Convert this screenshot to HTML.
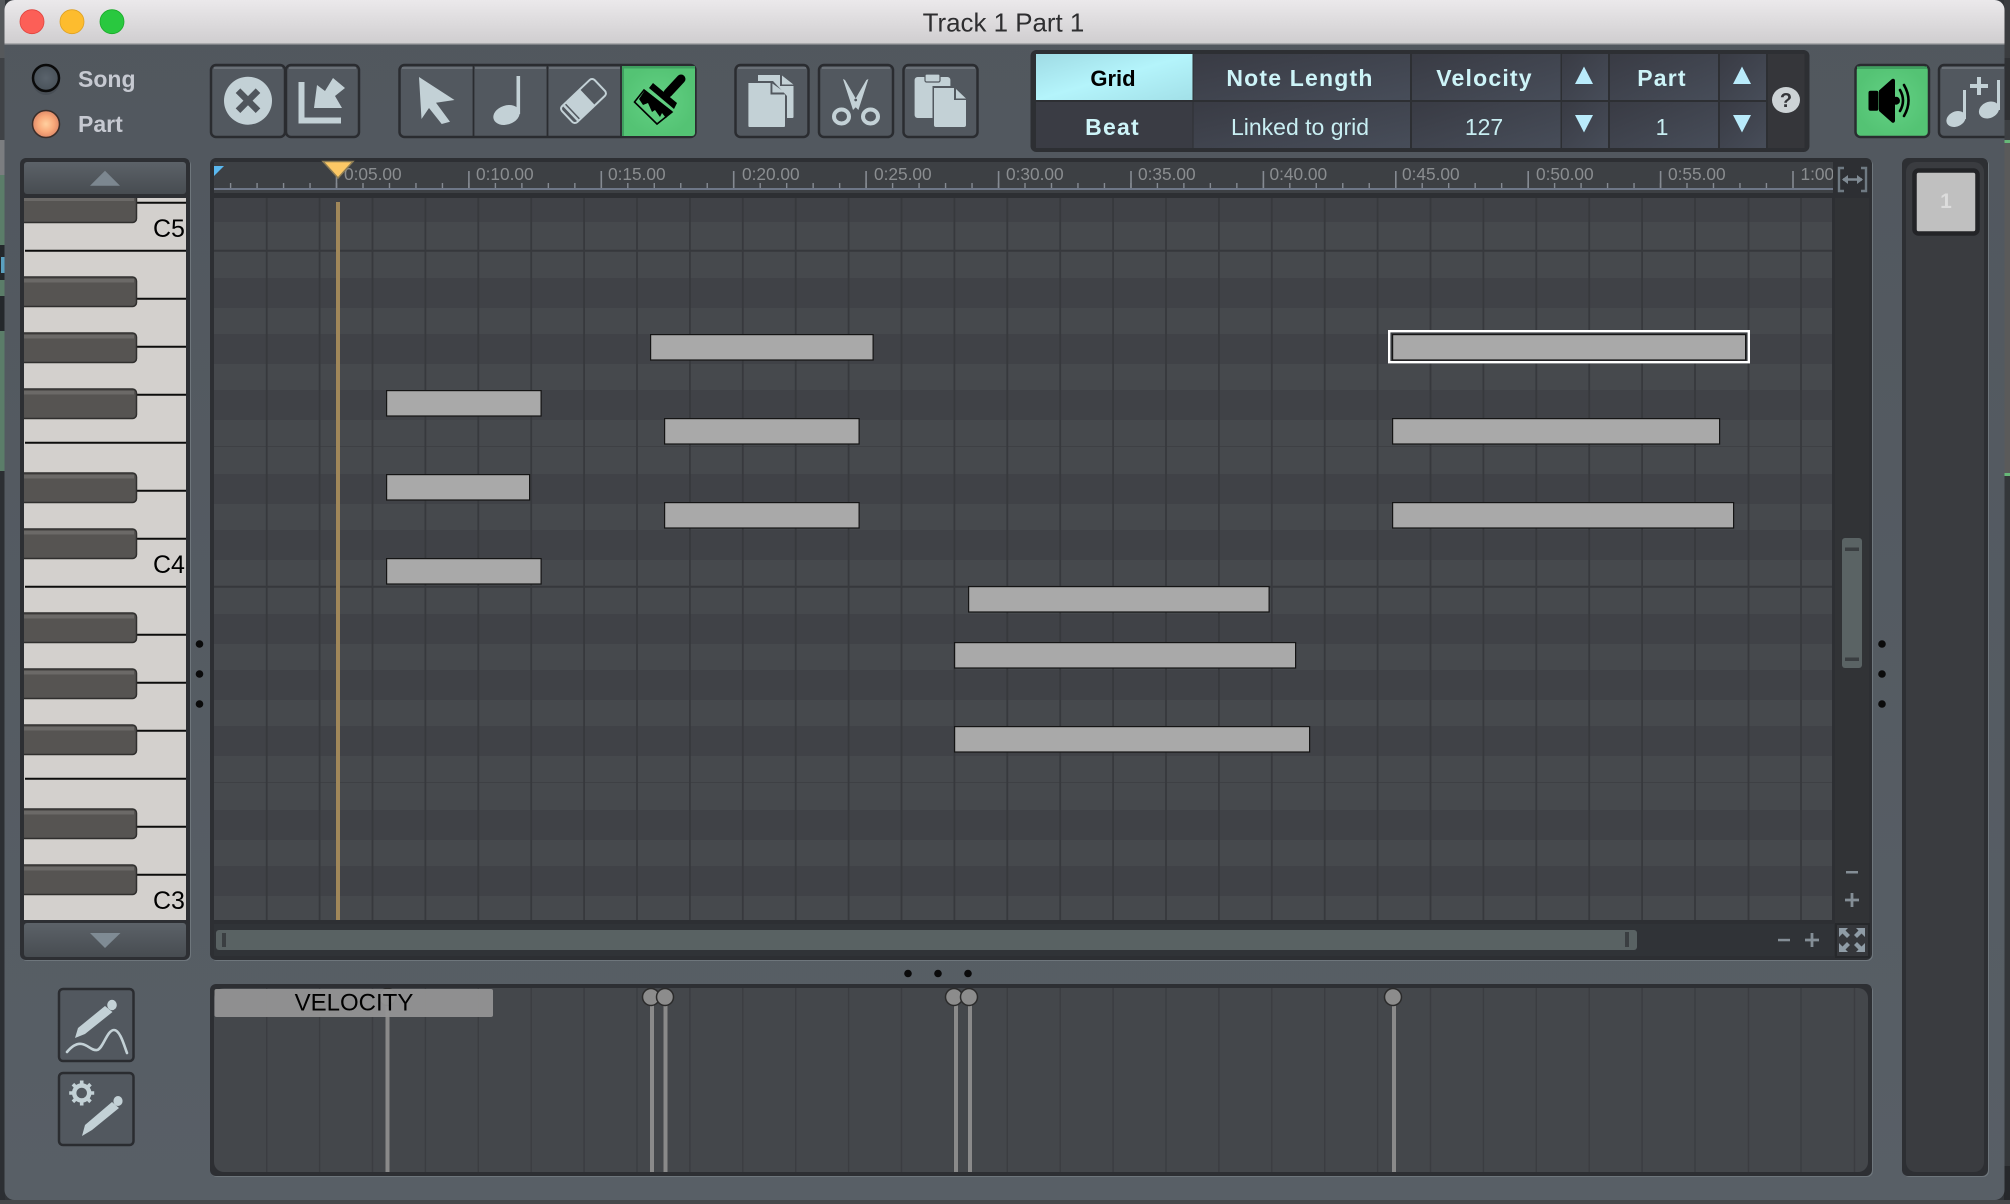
<!DOCTYPE html>
<html><head><meta charset="utf-8"><title>Track 1 Part 1</title>
<style>
html,body{margin:0;padding:0;background:#33363a;width:2010px;height:1204px;overflow:hidden}
svg{display:block}
text{font-family:"Liberation Sans",sans-serif}
.r{font-size:17.3px;fill:#8a8d90}
.h{font-size:23px;font-weight:bold;fill:#cdf4f8;text-anchor:middle;letter-spacing:1.2px}
.v{font-size:23px;fill:#c8eef2;text-anchor:middle}
.l{font-size:23px;font-weight:bold;fill:#c6c9d1}
.k{font-size:25px;fill:#000}
.btn{fill:#52585f;stroke:#2a2c30;stroke-width:2.5}
.hl{fill:#6a7077}
.ic{fill:#c3d1d6}
.cell{fill:url(#cell)}
.bk{fill:#565452;stroke:#302f2e;stroke-width:1.5}
.bh{fill:#6b6967}
.note{fill:#a9a9a9;stroke:#151515;stroke-width:1.2}
.dr{fill:#404247}
.dot{fill:#0b0b0b}
</style></head><body>
<svg width="2010" height="1204" viewBox="0 0 2010 1204" xmlns="http://www.w3.org/2000/svg">
<defs>
<linearGradient id="tb" x1="0" y1="0" x2="0" y2="1"><stop offset="0" stop-color="#ebe9eb"/><stop offset="1" stop-color="#d0ced0"/></linearGradient>
<linearGradient id="win" x1="0" y1="0" x2="0" y2="1"><stop offset="0" stop-color="#51575e"/><stop offset="1" stop-color="#585f66"/></linearGradient>
<linearGradient id="cell" x1="0" y1="0" x2="1" y2="1"><stop offset="0" stop-color="#393b44"/><stop offset="1" stop-color="#474d59"/></linearGradient>
<linearGradient id="grid" x1="0" y1="0" x2="1" y2="1"><stop offset="0" stop-color="#9fdbe4"/><stop offset=".5" stop-color="#b4f4fb"/><stop offset="1" stop-color="#a2e0e8"/></linearGradient>
<linearGradient id="ar" x1="0" y1="0" x2="0" y2="1"><stop offset="0" stop-color="#5c6268"/><stop offset="1" stop-color="#474c51"/></linearGradient>
<radialGradient id="gr"><stop offset="0" stop-color="#63d184"/><stop offset="1" stop-color="#54c374"/></radialGradient>
<radialGradient id="led1"><stop offset="0" stop-color="#5a636c"/><stop offset="1" stop-color="#49525a"/></radialGradient>
<radialGradient id="led2"><stop offset="0" stop-color="#ffd0a0"/><stop offset=".6" stop-color="#f9a97a"/><stop offset="1" stop-color="#e08a68"/></radialGradient>
<clipPath id="kb"><rect x="24" y="198" width="162" height="722"/></clipPath>
<clipPath id="rl"><rect x="214" y="162" width="1619" height="32"/></clipPath>
<clipPath id="wn"><rect x="4.5" y="0" width="2000" height="1200" rx="10"/></clipPath>
</defs>

<!-- outside the window -->
<rect width="2010" height="1204" fill="#313438"/>
<rect x="0" y="0" width="5" height="58" fill="#55585b"/>
<rect x="0" y="58" width="5" height="82" fill="#3f4246"/>
<rect x="0" y="140" width="5" height="35" fill="#7b7d80"/>
<rect x="0" y="175" width="5" height="70" fill="#5b7d69"/>
<rect x="0" y="245" width="5" height="35" fill="#24282c"/>
<rect x="1" y="257" width="4" height="16" fill="#5aa0c0"/>
<rect x="0" y="280" width="5" height="16" fill="#5b7d69"/>
<rect x="0" y="296" width="5" height="35" fill="#24282c"/>
<rect x="0" y="331" width="5" height="140" fill="#5b7d69"/>
<rect x="0" y="471" width="5" height="733" fill="#2c2f33"/>
<rect x="2004" y="0" width="6" height="58" fill="#3a3c3f"/>
<rect x="2004" y="58" width="6" height="62" fill="#2f3134"/>
<rect x="2004" y="120" width="6" height="20" fill="#3c3f42"/>
<rect x="2004" y="140" width="6" height="3" fill="#66b878"/>
<rect x="2004" y="143" width="6" height="330" fill="#5a5a5a"/>
<rect x="2004" y="473" width="6" height="3" fill="#66b878"/>
<rect x="2004" y="476" width="6" height="690" fill="#34373a"/>
<rect x="2004" y="1166" width="6" height="38" fill="#26282b"/>
<rect x="0" y="1200" width="2010" height="4" fill="#45474a"/>

<!-- window -->
<rect x="4.5" y="0" width="2000" height="1200" rx="10" fill="url(#win)"/>
<g clip-path="url(#wn)">
<rect x="4.5" y="0" width="2000" height="43" fill="url(#tb)"/>
<rect x="4.5" y="43" width="2000" height="1.5" fill="#a9aaac"/>
</g>
<circle cx="32" cy="21.7" r="12" fill="#fc5f57" stroke="#e0443e" stroke-width=".8"/>
<circle cx="72" cy="21.7" r="12" fill="#fdbc2e" stroke="#dea123" stroke-width=".8"/>
<circle cx="112" cy="21.7" r="12" fill="#29c83f" stroke="#1aab29" stroke-width=".8"/>
<text x="1003.5" y="31.6" text-anchor="middle" font-size="25.9" fill="#2e2e30">Track 1 Part 1</text>

<!-- LEDs -->
<ellipse cx="46" cy="80" rx="14" ry="15" fill="#484e55"/>
<circle cx="46" cy="78" r="13" fill="url(#led1)" stroke="#0a0a0a" stroke-width="2.5"/>
<circle cx="46" cy="124" r="13.5" fill="url(#led2)" stroke="#3a2e2a" stroke-width="1.5"/>
<text class="l" x="78" y="87">Song</text>
<text class="l" x="78" y="132">Part</text>

<!-- Toolbar buttons -->
<g>
<rect class="btn" x="211" y="65" width="74" height="72" rx="5"/><rect class="hl" x="214" y="67" width="68" height="2"/>
<rect class="btn" x="286" y="65" width="73" height="72" rx="5"/><rect class="hl" x="289" y="67" width="67" height="2"/>
<rect class="btn" x="399.5" y="65" width="296" height="72" rx="5"/>
<rect class="hl" x="402" y="67" width="71" height="2"/><rect class="hl" x="475" y="67" width="71" height="2"/><rect class="hl" x="549" y="67" width="71" height="2"/>
<path d="M473.5 65V137M547.5 65V137M621 65V137" stroke="#2a2c30" stroke-width="1.8"/>
<path d="M622 66H692a3 3 0 0 1 3 3V133a3 3 0 0 1-3 3H622Z" fill="url(#gr)"/>
<rect x="622" y="66" width="73" height="2.5" fill="#3f9f5f"/><rect x="622" y="66" width="2" height="70" fill="#3f9f5f"/>
<rect class="btn" x="735.5" y="65" width="73" height="72" rx="5"/><rect class="hl" x="738" y="67" width="68" height="2"/>
<rect class="btn" x="819" y="65" width="74" height="72" rx="5"/><rect class="hl" x="822" y="67" width="68" height="2"/>
<rect class="btn" x="903.5" y="65" width="74" height="72" rx="5"/><rect class="hl" x="906" y="67" width="69" height="2"/>
<rect x="1855.5" y="65" width="73.5" height="72" rx="5" fill="url(#gr)" stroke="#2a2c30" stroke-width="2.5"/><rect x="1857" y="66.5" width="70" height="2.5" fill="#3f9f5f"/>
<rect class="btn" x="1939" y="65" width="85" height="72" rx="5" clip-path="url(#wn)"/><rect class="hl" x="1942" y="67" width="62" height="2"/>
</g>

<!-- X -->
<circle cx="248" cy="100.7" r="24" class="ic"/>
<path d="M238 90.7L258 110.7M258 90.7L238 110.7" stroke="#4f555c" stroke-width="6.5"/>
<!-- import -->
<path d="M301.5 82V120.5H341" fill="none" stroke="#c3d1d6" stroke-width="6"/>
<polygon class="ic" points="333,78 345,88 335,96 342,108 314,108 317,85 325,91"/>
<!-- pointer -->
<polygon class="ic" points="419,77 454.5,100 436,102.7 450,121.7 441.7,124 429,108 421.5,119"/>
<!-- note -->
<rect class="ic" x="516.5" y="76" width="3.6" height="38"/>
<ellipse class="ic" cx="506.5" cy="115" rx="13.5" ry="9.5" transform="rotate(-18 506.5 115)"/>
<!-- eraser -->
<g transform="rotate(-43.5 583.5 101)">
<rect x="561" y="90" width="45" height="22" rx="3.5" fill="#52585f" stroke="#c3d1d6" stroke-width="2"/>
<rect x="569" y="90" width="20" height="22" class="ic"/>
<rect x="565" y="90" width="2.5" height="22" class="ic"/>
</g>
<!-- brush -->
<path d="M681 79L668 93" stroke="#000" stroke-width="9" stroke-linecap="round"/>
<polygon points="653,83 677,103 674,109 649,88" fill="#000"/>
<polygon points="645,90 672,111 666,118 662,113 660,117 655,110 652,112 648,103 643,105 639,99" fill="#000"/>
<polygon points="634.5,102 644,90 672,112 657,124" fill="none" stroke="#000" stroke-width="1.6"/>
<!-- copy -->
<path class="ic" d="M758 75H780V86H793.5V117a1 1 0 0 1-1 1H758Z"/>
<path class="ic" d="M782 75.5L793.4 84.5H782Z"/>
<path d="M746.5 81H773L787 96V129H746.5Z" fill="#52585f"/>
<path class="ic" d="M748.4 83H770.5V94.5H785V126a1 1 0 0 1-1 1H749.4a1 1 0 0 1-1-1Z"/>
<path class="ic" d="M772.4 83.5L785 92.5H772.4Z"/>
<!-- scissors -->
<polygon class="ic" points="843,79 845,80 859,104 853,110"/>
<polygon class="ic" points="868.4,79 866.4,80 852.4,104 858.4,110"/>
<circle cx="855.7" cy="100" r="1.4" fill="#52585f"/>
<ellipse cx="841.5" cy="116.5" rx="7.5" ry="7" fill="#52585f" stroke="#c3d1d6" stroke-width="4"/>
<ellipse cx="870.5" cy="116.5" rx="7.5" ry="7" fill="#52585f" stroke="#c3d1d6" stroke-width="4"/>
<!-- paste -->
<rect class="ic" x="914.6" y="77" width="35.8" height="41" rx="3"/>
<rect class="ic" x="925" y="74" width="15" height="8" rx="1.5" stroke="#52585f" stroke-width="1.2"/>
<path d="M932.5 86H955L967.5 99V127a3 3 0 0 1-3 3H935.5a3 3 0 0 1-3-3Z" fill="#52585f"/>
<path class="ic" d="M934 88H954V100H966V125a2 2 0 0 1-2 2H936a2 2 0 0 1-2-2Z"/>
<path class="ic" d="M956 89L966 98.5H956Z"/>
<!-- speaker -->
<rect x="1868.5" y="90.7" width="10" height="20" rx="2" fill="#000"/>
<path d="M1879 90.5L1892 79a2 2 0 0 1 3 1.5V121a2 2 0 0 1-3 1.5L1879 111Z" fill="#000"/>
<circle cx="1896" cy="100.7" r="4" fill="#000"/>
<path d="M1900 90Q1906 100.5 1900 111M1904 85Q1913 100.5 1904 116" fill="none" stroke="#000" stroke-width="2.6" stroke-linecap="round"/>
<!-- add notes -->
<g clip-path="url(#wn)">
<rect class="ic" x="1963" y="90" width="3" height="29"/>
<ellipse class="ic" cx="1956" cy="119" rx="10" ry="7.5" transform="rotate(-25 1956 119)"/>
<rect class="ic" x="1997" y="80" width="3" height="30"/>
<ellipse class="ic" cx="1989" cy="110" rx="10.5" ry="8" transform="rotate(-25 1989 110)"/>
<path d="M1979 77V95M1970 86H1988" stroke="#c3d1d6" stroke-width="4"/>
</g>

<!-- Grid panel -->
<rect x="1030.5" y="50" width="779" height="102" rx="6" fill="#2d2f33"/>
<rect x="1036" y="54" width="156.5" height="46" fill="url(#grid)"/>
<rect x="1193.5" y="54" width="216.5" height="46" class="cell"/>
<rect x="1412" y="54" width="148.5" height="46" class="cell"/>
<rect x="1562" y="54" width="46" height="46" class="cell"/>
<rect x="1610" y="54" width="108" height="46" class="cell"/>
<rect x="1720" y="54" width="46" height="46" class="cell"/>
<rect x="1036" y="102" width="156.5" height="46" fill="#3a3c44"/>
<rect x="1193.5" y="102" width="216.5" height="46" class="cell"/>
<rect x="1412" y="102" width="148.5" height="46" class="cell"/>
<rect x="1562" y="102" width="46" height="46" class="cell"/>
<rect x="1610" y="102" width="108" height="46" class="cell"/>
<rect x="1720" y="102" width="46" height="46" class="cell"/>
<rect x="1768" y="54" width="36.5" height="94" fill="#35363a"/>
<text x="1113" y="86" text-anchor="middle" font-size="22" font-weight="bold" fill="#000">Grid</text>
<text class="h" x="1300" y="86">Note Length</text>
<text class="h" x="1484.5" y="86">Velocity</text>
<text class="h" x="1662" y="86">Part</text>
<text class="h" x="1112.5" y="135">Beat</text>
<text class="v" x="1300" y="135">Linked to grid</text>
<text class="v" x="1484" y="135">127</text>
<text class="v" x="1662" y="135">1</text>
<polygon points="1584,66.5 1593,84 1575,84" fill="#b9ebfb"/>
<polygon points="1742,66.5 1751,84 1733,84" fill="#b9ebfb"/>
<polygon points="1584,132.5 1593,115 1575,115" fill="#b9ebfb"/>
<polygon points="1742,132.5 1751,115 1733,115" fill="#b9ebfb"/>
<ellipse cx="1786" cy="100" rx="14" ry="13" fill="#cdd3d6"/>
<text x="1786" y="107" text-anchor="middle" font-size="20" font-weight="bold" fill="#35363a">?</text>

<!-- Piano panel -->
<rect x="21" y="159" width="170" height="802" rx="6" fill="#6e767c"/>
<rect x="20" y="158" width="170" height="802" rx="6" fill="#2d2f33"/>
<rect x="24" y="162" width="162" height="32" rx="3" fill="url(#ar)"/>
<polygon points="105,170.7 120,185.7 90,185.7" fill="#7c8790"/>
<rect x="24" y="198" width="162" height="722" fill="#d3d0cd"/>
<g clip-path="url(#kb)">
<path d="M137 202.7H186M25 250.7H186M137 298.7H186M137 346.7H186M137 394.7H186M25 442.7H186M137 490.7H186M137 538.7H186M25 586.7H186M137 634.7H186M137 682.7H186M137 730.7H186M25 778.7H186M137 826.7H186M137 874.7H186" stroke="#0c0c0c" stroke-width="2"/>
<rect class="bk" x="10" y="193" width="126.5" height="29.5" rx="4"/><rect class="bh" x="24" y="198" width="110" height="3"/>
<rect class="bk" x="10" y="277" width="126.5" height="29.5" rx="4"/><rect class="bh" x="24" y="279" width="110" height="3.5"/>
<rect class="bk" x="10" y="333" width="126.5" height="29.5" rx="4"/><rect class="bh" x="24" y="335" width="110" height="3.5"/>
<rect class="bk" x="10" y="389" width="126.5" height="29.5" rx="4"/><rect class="bh" x="24" y="391" width="110" height="3.5"/>
<rect class="bk" x="10" y="473" width="126.5" height="29.5" rx="4"/><rect class="bh" x="24" y="475" width="110" height="3.5"/>
<rect class="bk" x="10" y="529" width="126.5" height="29.5" rx="4"/><rect class="bh" x="24" y="531" width="110" height="3.5"/>
<rect class="bk" x="10" y="613" width="126.5" height="29.5" rx="4"/><rect class="bh" x="24" y="615" width="110" height="3.5"/>
<rect class="bk" x="10" y="669" width="126.5" height="29.5" rx="4"/><rect class="bh" x="24" y="671" width="110" height="3.5"/>
<rect class="bk" x="10" y="725" width="126.5" height="29.5" rx="4"/><rect class="bh" x="24" y="727" width="110" height="3.5"/>
<rect class="bk" x="10" y="809" width="126.5" height="29.5" rx="4"/><rect class="bh" x="24" y="811" width="110" height="3.5"/>
<rect class="bk" x="10" y="865" width="126.5" height="29.5" rx="4"/><rect class="bh" x="24" y="867" width="110" height="3.5"/>
</g>
<text class="k" x="153" y="237">C5</text>
<text class="k" x="153" y="573">C4</text>
<text class="k" x="153" y="909">C3</text>
<rect x="24" y="923" width="162" height="34" rx="3" fill="url(#ar)"/>
<polygon points="105,948 120.5,933 90,933" fill="#7f8b94"/>

<!-- Main panel -->
<rect x="211" y="159" width="1662" height="802" rx="6" fill="#6e767c"/>
<rect x="210" y="158" width="1662" height="802" rx="6" fill="#2d2f33"/>
<!-- ruler -->
<rect x="214" y="162" width="1619" height="31" fill="#3d4044"/>
<rect x="214" y="188" width="1619" height="2" fill="#6e7788"/>
<g clip-path="url(#rl)">
<path stroke="#858a92" stroke-width="1.4" fill="none" d="M230.6 183v5m26.48-5v5m26.48-5v5m26.48-5v5m26.48-5v5m26.48-5v5m26.48-5v5m26.48-5v5m26.48-5v5m26.48-5v5m26.48-5v5m26.48-5v5m26.48-5v5m26.48-5v5m26.48-5v5m26.48-5v5m26.48-5v5m26.48-5v5m26.48-5v5m26.48-5v5m26.48-5v5m26.48-5v5m26.48-5v5m26.48-5v5m26.48-5v5m26.48-5v5m26.48-5v5m26.48-5v5m26.48-5v5m26.48-5v5m26.48-5v5m26.48-5v5m26.48-5v5m26.48-5v5m26.48-5v5m26.48-5v5m26.48-5v5m26.48-5v5m26.48-5v5m26.48-5v5m26.48-5v5m26.48-5v5m26.48-5v5m26.48-5v5m26.48-5v5m26.48-5v5m26.48-5v5m26.48-5v5m26.48-5v5m26.48-5v5m26.48-5v5m26.48-5v5m26.48-5v5m26.48-5v5m26.48-5v5m26.48-5v5m26.48-5v5m26.48-5v5m26.48-5v5"/>
<path stroke="#858a92" stroke-width="1.6" fill="none" d="M336.5 171V188M468.9 171V188M601.3 171V188M733.7 171V188M866.1 171V188M998.6 171V188M1131 171V188M1263.4 171V188M1395.8 171V188M1528.2 171V188M1660.6 171V188M1793 171V188"/>
<text class="r" x="344" y="180">0:05.00</text>
<text class="r" x="476" y="180">0:10.00</text>
<text class="r" x="608" y="180">0:15.00</text>
<text class="r" x="742" y="180">0:20.00</text>
<text class="r" x="874" y="180">0:25.00</text>
<text class="r" x="1006" y="180">0:30.00</text>
<text class="r" x="1138" y="180">0:35.00</text>
<text class="r" x="1269.5" y="180">0:40.00</text>
<text class="r" x="1402" y="180">0:45.00</text>
<text class="r" x="1536" y="180">0:50.00</text>
<text class="r" x="1668" y="180">0:55.00</text>
<text class="r" x="1800.5" y="180">1:00.00</text>
</g>
<polygon points="214,166 224,166 214,176" fill="#5ab8f0"/>
<polygon points="323,161.5 353,161.5 338,178" fill="#fcc865" stroke="#8d7d55" stroke-width="1.5"/>
<path d="M1844 168H1839V191H1844M1861 168H1866V191H1861" fill="none" stroke="#6f7a83" stroke-width="2.4"/>
<path d="M1843 179.5H1862" stroke="#7f8a93" stroke-width="2.4"/>
<polygon points="1842,179.5 1848,175 1848,184" fill="#7f8a93"/>
<polygon points="1863,179.5 1857,175 1857,184" fill="#7f8a93"/>

<!-- note grid -->
<rect x="214" y="198" width="1618" height="722" fill="#46494d"/>
<rect class="dr" x="214" y="198" width="1618" height="24"/>
<rect class="dr" x="214" y="278" width="1618" height="30"/>
<rect class="dr" x="214" y="334" width="1618" height="30"/>
<rect class="dr" x="214" y="390" width="1618" height="30"/>
<rect class="dr" x="214" y="474" width="1618" height="30"/>
<rect class="dr" x="214" y="530" width="1618" height="30"/>
<rect class="dr" x="214" y="614" width="1618" height="30"/>
<rect class="dr" x="214" y="670" width="1618" height="30"/>
<rect class="dr" x="214" y="726" width="1618" height="30"/>
<rect class="dr" x="214" y="810" width="1618" height="30"/>
<rect class="dr" x="214" y="866" width="1618" height="30"/>
<path d="M214 250.7H1832M214 586.7H1832" stroke="#36383c" stroke-width="2"/>
<path d="M214 446.5H1832M214 782.5H1832" stroke="#3e4044" stroke-width="1"/>
<path stroke="#37393d" stroke-width="1.8" fill="none" d="M266.7 198V920M319.6 198V920M372.5 198V920M425.4 198V920M478.3 198V920M531.2 198V920M584.1 198V920M637 198V920M689.9 198V920M742.8 198V920M795.7 198V920M848.6 198V920M901.5 198V920M954.4 198V920M1007.3 198V920M1060.2 198V920M1113.1 198V920M1166 198V920M1218.9 198V920M1271.8 198V920M1324.7 198V920M1377.6 198V920M1430.5 198V920M1483.4 198V920M1536.3 198V920M1589.2 198V920M1642.1 198V920M1695 198V920M1748.5 198V920M1801 198V920"/>
<rect x="336" y="202" width="4" height="718" fill="#a0875a"/>
<!-- notes -->
<rect class="note" x="386.6" y="390.6" width="154.5" height="25.4"/>
<rect class="note" x="386.6" y="474.6" width="143" height="25.4"/>
<rect class="note" x="386.6" y="558.6" width="154.5" height="25.4"/>
<rect class="note" x="650.6" y="334.6" width="222.5" height="25.4"/>
<rect class="note" x="664.6" y="418.6" width="194.5" height="25.4"/>
<rect class="note" x="664.6" y="502.6" width="194.5" height="25.4"/>
<rect class="note" x="968.6" y="586.6" width="300.5" height="25.4"/>
<rect class="note" x="954.6" y="642.6" width="341" height="25.4"/>
<rect class="note" x="954.6" y="726.6" width="355" height="25.4"/>
<rect x="1389.2" y="331.2" width="359.6" height="31" fill="#3a3c40" stroke="#fff" stroke-width="2.4"/>
<rect class="note" x="1392.6" y="334.6" width="353" height="25.4"/>
<rect class="note" x="1392.6" y="418.6" width="327" height="25.4"/>
<rect class="note" x="1392.6" y="502.6" width="341" height="25.4"/>

<!-- scrollbars -->
<rect x="1835" y="198" width="34" height="725" fill="#313336"/>
<rect x="1842" y="538" width="20" height="130" rx="3" fill="#5a6364"/>
<rect x="1845" y="547.5" width="14" height="3.5" fill="#3a3e41"/>
<rect x="1845" y="657.5" width="14" height="3.5" fill="#3a3e41"/>
<rect x="1846" y="871" width="12" height="2.5" fill="#848e96"/>
<path d="M1845 900H1859M1852 893V907" stroke="#848e96" stroke-width="2.8"/>
<rect x="214" y="924" width="1620" height="32" fill="#303337"/>
<rect x="216" y="930" width="1421" height="20" rx="3" fill="#596263"/>
<rect x="222" y="933" width="4" height="14" fill="#3a3e41"/>
<rect x="1625" y="932" width="4" height="15" fill="#3a3e41"/>
<rect x="1778" y="938.8" width="12" height="2.5" fill="#848e96"/>
<path d="M1805 940H1819M1812 933V947" stroke="#848e96" stroke-width="2.8"/>
<rect x="1835" y="923" width="35" height="35" fill="#26282b"/>
<rect x="1837" y="925" width="31" height="31" fill="#35373b"/>
<g fill="#8f9ca6">
<polygon points="1839,928 1848,928 1845.5,930.5 1850,935 1847,938 1842.5,933.5 1839,937"/>
<polygon points="1865,928 1856,928 1858.5,930.5 1854,935 1857,938 1861.5,933.5 1865,937"/>
<polygon points="1839,952 1848,952 1845.5,949.5 1850,945 1847,942 1842.5,946.5 1839,943"/>
<polygon points="1865,952 1856,952 1858.5,949.5 1854,945 1857,942 1861.5,946.5 1865,943"/>
</g>

<!-- handle dots -->
<circle class="dot" cx="199.5" cy="644" r="3.8"/><circle class="dot" cx="199.5" cy="674" r="3.8"/><circle class="dot" cx="199.5" cy="704" r="3.8"/>
<circle class="dot" cx="1882" cy="644" r="3.8"/><circle class="dot" cx="1882" cy="674" r="3.8"/><circle class="dot" cx="1882" cy="704" r="3.8"/>
<circle class="dot" cx="908" cy="973.5" r="3.8"/><circle class="dot" cx="938" cy="973.5" r="3.8"/><circle class="dot" cx="968" cy="973.5" r="3.8"/>

<!-- Right panel -->
<rect x="1903" y="159" width="86" height="1018" rx="6" fill="#6e767c"/>
<rect x="1902" y="158" width="86" height="1018" rx="6" fill="#2d2f33"/>
<rect x="1906" y="162" width="78" height="1010" rx="10" fill="#3a3c40"/>
<rect x="1914.5" y="170.5" width="63" height="63" rx="4" fill="#c0c0c0" stroke="#232427" stroke-width="4.5"/>
<text x="1946" y="208" text-anchor="middle" font-size="21" font-weight="bold" fill="#dcdcdc">1</text>

<!-- Velocity panel -->
<rect x="211" y="985" width="1662" height="192" rx="6" fill="#6e767c"/>
<rect x="210" y="984" width="1662" height="192" rx="6" fill="#2d2f33"/>
<rect x="214" y="988" width="1654" height="184" rx="10" fill="#44474b"/>
<path stroke="#3b3d41" stroke-width="1.4" fill="none" d="M266.7 988V1172M319.6 988V1172M372.5 988V1172M425.4 988V1172M478.3 988V1172M531.2 988V1172M584.1 988V1172M637 988V1172M689.9 988V1172M742.8 988V1172M795.7 988V1172M848.6 988V1172M901.5 988V1172M954.4 988V1172M1007.3 988V1172M1060.2 988V1172M1113.1 988V1172M1166 988V1172M1218.9 988V1172M1271.8 988V1172M1324.7 988V1172M1377.6 988V1172M1430.5 988V1172M1483.4 988V1172M1536.3 988V1172M1589.2 988V1172M1642.1 988V1172M1695 988V1172M1748.5 988V1172M1801 988V1172M1854.5 988V1172"/>
<g fill="#8a8a8a">
<rect x="385.5" y="997" width="4" height="175"/>
<rect x="650" y="997" width="4" height="175"/>
<rect x="663.5" y="997" width="4" height="175"/>
<rect x="954" y="997" width="4" height="175"/>
<rect x="968" y="997" width="4" height="175"/>
<rect x="1392" y="997" width="4" height="175"/>
</g>
<g fill="#8c8c8c" stroke="#2b2b2b" stroke-width="1.5">
<circle cx="387.5" cy="997" r="8.5"/>
<circle cx="651" cy="997" r="8.5"/>
<circle cx="665" cy="997" r="8.5"/>
<circle cx="954" cy="997" r="8.5"/>
<circle cx="969" cy="997" r="8.5"/>
<circle cx="1393" cy="997" r="8.5"/>
</g>
<rect x="214.5" y="989" width="278.5" height="28" rx="2" fill="#939393" fill-opacity=".95"/>
<text x="354" y="1010.5" text-anchor="middle" font-size="24" fill="#000">VELOCITY</text>

<!-- draw buttons -->
<rect class="btn" x="59" y="989" width="74.5" height="72" rx="4"/>
<rect class="btn" x="59" y="1073" width="74.5" height="72" rx="4"/>
<polygon class="ic" points="105,1006 112.5,1012 85,1034 75,1038 78,1028"/>
<ellipse class="ic" cx="112" cy="1005" rx="4.8" ry="5.2"/>
<path d="M67 1052C72 1046 77 1043 82 1044C88 1045 92 1051 97 1050C103 1049 107 1030 114 1030C120 1030 124 1045 127 1053" fill="none" stroke="#c3d1d6" stroke-width="2.6" stroke-linecap="round"/>
<polygon class="ic" points="112,1102 119,1108 92,1130 82,1136 85,1125"/>
<ellipse class="ic" cx="118" cy="1101" rx="4.6" ry="5"/>
<circle cx="81.7" cy="1093" r="7.5" fill="none" stroke="#c3d1d6" stroke-width="4.4"/>
<path d="M81.7 1080.5v4M81.7 1101.5v4M69.2 1093h4M90.2 1093h4M72.9 1084.2l2.8 2.8M87.7 1099l2.8 2.8M90.5 1084.2l-2.8 2.8M75.7 1099l-2.8 2.8" stroke="#c3d1d6" stroke-width="3.6"/>
</svg>
</body></html>
